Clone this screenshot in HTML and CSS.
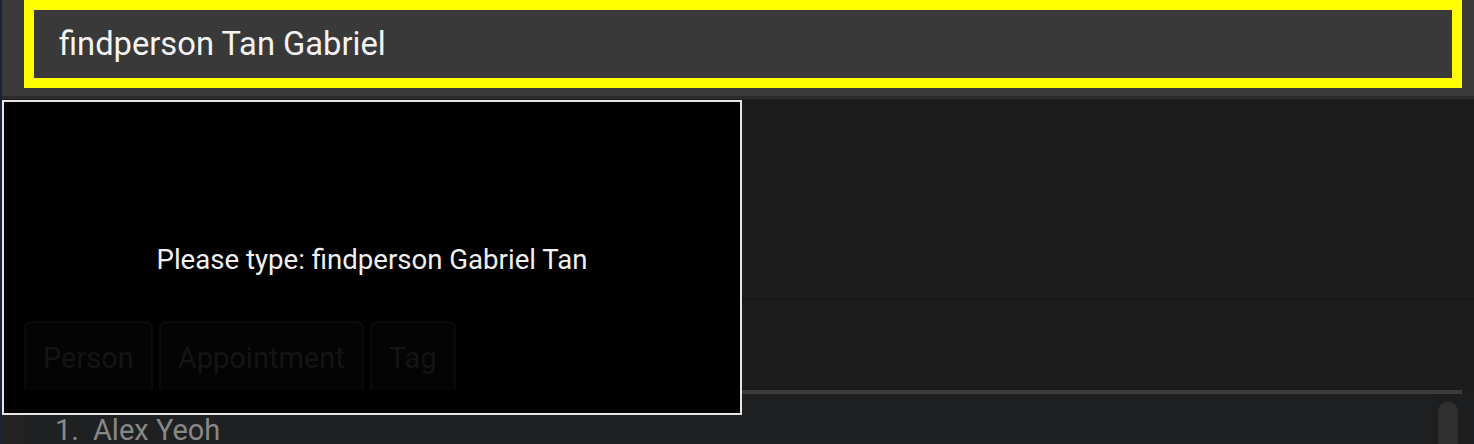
FILE: index.html
```html
<!DOCTYPE html>
<html>
<head>
<meta charset="utf-8">
<link rel="stylesheet" href="styles.css">
</head>
<body>
<div class="app">
  <div class="cmd-bar">
    <div class="cmd-box"><span class="cmd-text">findperson Tan Gabriel</span></div>
  </div>
  <div class="result-panel"></div>
  <div class="tab-area">
    <div class="tabs">
      <div class="tab">Person</div>
      <div class="tab">Appointment</div>
      <div class="tab">Tag</div>
    </div>
    <div class="tab-line"></div>
  </div>
  <div class="list">
    <div class="list-gutter"></div>
    <div class="list-body">
      <div class="row"><span class="idx">1.</span><span class="name">Alex Yeoh</span></div>
    </div>
    <div class="scroll-track"><div class="scroll-thumb"></div></div>
  </div>
  <div class="popup">
    <span class="popup-text">Please type: findperson Gabriel Tan</span>
  </div>
</div>
</body>
</html>
```

FILE: styles.css
```css
* { box-sizing: border-box; }
html, body { margin: 0; padding: 0; height: 100%; overflow: hidden; }
body {
  background: #1c1c1c;
  font-family: Roboto, "Noto Sans", sans-serif;
}
.app {
  position: relative;
  height: 444px;
  border-left: 2px solid #1b2433;
  display: flex;
  flex-direction: column;
}
.app > * { flex-shrink: 0; }
.cmd-bar {
  height: 99px;
  background: #3a3a3a;
  padding: 0 12px 0 22px;
  border-bottom: 3px solid #2b2b2b;
}
.cmd-box {
  height: 88px;
  border: 10px solid #ffff00;
  background: #393939;
  display: flex;
  align-items: center;
  padding-left: 25px;
}
.cmd-text {
  color: #f4f4f4;
  font-size: 32.7px;
  line-height: normal;
}
.result-panel {
  height: 201px;
  background: #1c1c1c;
  border-top: 1px solid #1f1f1f;
  border-bottom: 2px solid #171717;
}
.tab-area {
  display: flex;
  flex-direction: column;
  padding: 21px 12px 0 22px;
}
.tabs {
  display: flex;
  gap: 6px;
  height: 69px;
  position: relative;
  z-index: 2;
}
.tab {
  background: #040404;
  border: 2px solid #0b0b0b;
  border-bottom: none;
  border-radius: 7px 7px 0 0;
  color: #141414;
  font-size: 29px;
  padding: 3px 17px 0;
  display: flex;
  align-items: center;
}
.tab-line {
  height: 4px;
  background: #3c3c3c;
}
.list {
  flex: 1;
  display: flex;
  background: #1f2022;
}
.list-gutter {
  width: 22px;
  background: #232323;
}
.list-body {
  flex: 1;
  padding-left: 31px;
}
.row {
  color: #878787;
  font-size: 29px;
  line-height: 34px;
  margin-top: 19px;
  white-space: nowrap;
}
.idx { margin-right: 14px; }
.scroll-track {
  width: 42px;
  background: #1d1e1f;
  padding: 8px 16px 0 6px;
}
.scroll-thumb {
  height: 80px;
  background: #2f2f2f;
  border-radius: 9px;
}
.popup {
  position: absolute;
  left: 0;
  top: 100px;
  width: 740px;
  height: 315px;
  background: #000;
  border: 2px solid #e6e6e6;
  z-index: 1;
  display: flex;
  align-items: center;
  justify-content: center;
  padding-top: 4px;
}
.popup-text {
  color: #f0f0f0;
  font-size: 27.6px;
  line-height: normal;
}
```
